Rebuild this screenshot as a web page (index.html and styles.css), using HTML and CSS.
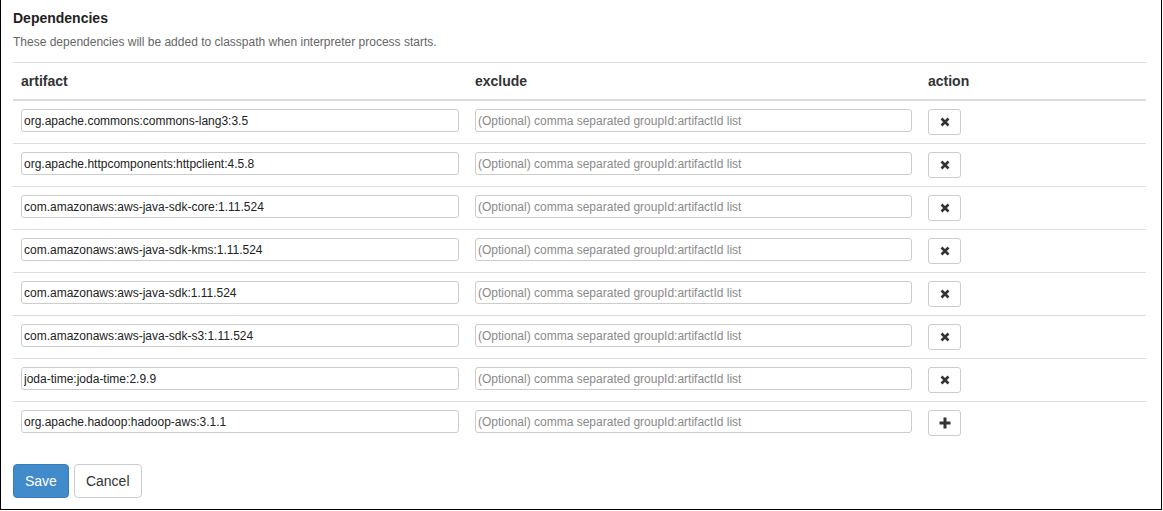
FILE: index.html
```html
<!DOCTYPE html>
<html>
<head>
<meta charset="utf-8">
<link rel="stylesheet" href="styles.css">
</head>
<body>
<div class="frame">
  <h3 class="title">Dependencies</h3>
  <p class="desc">These dependencies will be added to classpath when interpreter process starts.</p>
  <table class="deps">
    <thead>
      <tr><th class="c-art">artifact</th><th class="c-ex">exclude</th><th class="c-act">action</th></tr>
    </thead>
    <tbody>
      <tr><td><input class="field" value="org.apache.commons:commons-lang3:3.5"></td><td><input class="field" placeholder="(Optional) comma separated groupId:artifactId list"></td><td><button class="icon-btn"><svg width="10" height="10" viewBox="0 0 10 10"><path d="M1.5 1.5L8.5 8.5M8.5 1.5L1.5 8.5" stroke="#333" stroke-width="2.6"/></svg></button></td></tr>
      <tr><td><input class="field" value="org.apache.httpcomponents:httpclient:4.5.8"></td><td><input class="field" placeholder="(Optional) comma separated groupId:artifactId list"></td><td><button class="icon-btn"><svg width="10" height="10" viewBox="0 0 10 10"><path d="M1.5 1.5L8.5 8.5M8.5 1.5L1.5 8.5" stroke="#333" stroke-width="2.6"/></svg></button></td></tr>
      <tr><td><input class="field" value="com.amazonaws:aws-java-sdk-core:1.11.524"></td><td><input class="field" placeholder="(Optional) comma separated groupId:artifactId list"></td><td><button class="icon-btn"><svg width="10" height="10" viewBox="0 0 10 10"><path d="M1.5 1.5L8.5 8.5M8.5 1.5L1.5 8.5" stroke="#333" stroke-width="2.6"/></svg></button></td></tr>
      <tr><td><input class="field" value="com.amazonaws:aws-java-sdk-kms:1.11.524"></td><td><input class="field" placeholder="(Optional) comma separated groupId:artifactId list"></td><td><button class="icon-btn"><svg width="10" height="10" viewBox="0 0 10 10"><path d="M1.5 1.5L8.5 8.5M8.5 1.5L1.5 8.5" stroke="#333" stroke-width="2.6"/></svg></button></td></tr>
      <tr><td><input class="field" value="com.amazonaws:aws-java-sdk:1.11.524"></td><td><input class="field" placeholder="(Optional) comma separated groupId:artifactId list"></td><td><button class="icon-btn"><svg width="10" height="10" viewBox="0 0 10 10"><path d="M1.5 1.5L8.5 8.5M8.5 1.5L1.5 8.5" stroke="#333" stroke-width="2.6"/></svg></button></td></tr>
      <tr><td><input class="field" value="com.amazonaws:aws-java-sdk-s3:1.11.524"></td><td><input class="field" placeholder="(Optional) comma separated groupId:artifactId list"></td><td><button class="icon-btn"><svg width="10" height="10" viewBox="0 0 10 10"><path d="M1.5 1.5L8.5 8.5M8.5 1.5L1.5 8.5" stroke="#333" stroke-width="2.6"/></svg></button></td></tr>
      <tr><td><input class="field" value="joda-time:joda-time:2.9.9"></td><td><input class="field" placeholder="(Optional) comma separated groupId:artifactId list"></td><td><button class="icon-btn"><svg width="10" height="10" viewBox="0 0 10 10"><path d="M1.5 1.5L8.5 8.5M8.5 1.5L1.5 8.5" stroke="#333" stroke-width="2.6"/></svg></button></td></tr>
      <tr><td><input class="field" value="org.apache.hadoop:hadoop-aws:3.1.1"></td><td><input class="field" placeholder="(Optional) comma separated groupId:artifactId list"></td><td><button class="icon-btn"><svg width="12" height="12" viewBox="0 0 12 12"><path d="M6 0.5V11.5M0.5 6H11.5" stroke="#333" stroke-width="3"/></svg></button></td></tr>
    </tbody>
  </table>
  <div class="actions">
    <button class="btn btn-primary">Save</button>
    <button class="btn btn-default">Cancel</button>
  </div>
</div>
</body>
</html>
```

FILE: styles.css
```css
html, body {
  margin: 0;
  padding: 0;
  background: #fff;
}
body {
  font-family: "Liberation Sans", Arial, Helvetica, sans-serif;
  color: #333;
}
.frame {
  box-sizing: border-box;
  width: 1162px;
  height: 510px;
  border: 1px solid #000;
  border-top: none;
  padding: 8px 15px 0 12px;
}
.title {
  margin: 0 0 6px 0;
  font-size: 14px;
  line-height: 20px;
  font-weight: bold;
  color: #222;
}
.desc {
  margin: 0 0 11px 0;
  font-size: 12px;
  line-height: 17px;
  color: #666;
}
.deps {
  width: 100%;
  border-collapse: collapse;
  border-top: 1px solid #ddd;
  table-layout: fixed;
}
.deps th {
  text-align: left;
  font-size: 14px;
  font-weight: bold;
  line-height: 20px;
  padding: 8px;
  border-bottom: 2px solid #ddd;
  color: #333;
}
.c-art { width: 438px; }
.c-ex { width: 437px; }
.deps td {
  padding: 8px;
  border-top: 1px solid #ddd;
  vertical-align: top;
  height: 26px;
}
.deps tbody tr:first-child td {
  border-top: none;
}
.field {
  box-sizing: border-box;
  display: block;
  width: 100%;
  height: 23px;
  margin: 0;
  padding: 0 2px;
  border: 1px solid #ccc;
  border-radius: 3px;
  font-family: "Liberation Sans", Arial, sans-serif;
  font-size: 12px;
  color: #222;
  background: #fff;
  outline: none;
}
.field::placeholder {
  color: #8a8a8a;
}
.icon-btn {
  box-sizing: border-box;
  width: 33px;
  height: 26px;
  margin: 0;
  padding: 0;
  border: 1px solid #ccc;
  border-radius: 3px;
  background: #fff;
  display: flex;
  align-items: center;
  justify-content: center;
}
.actions {
  margin-top: 20px;
  display: flex;
  gap: 5px;
}
.btn {
  box-sizing: border-box;
  height: 34px;
  padding: 6px 11px;
  font-family: "Liberation Sans", Arial, sans-serif;
  font-size: 14px;
  line-height: 20px;
  border-radius: 4px;
  border: 1px solid #ccc;
  margin: 0;
}
.btn-primary {
  background: #428bca;
  border-color: #357ebd;
  color: #fff;
}
.btn-default {
  background: #fff;
  color: #333;
}
```
